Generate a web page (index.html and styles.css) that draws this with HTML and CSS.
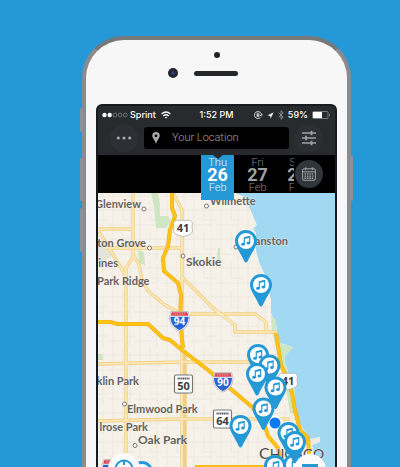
FILE: index.html
```
<!DOCTYPE html>
<html lang="en">
<head>
<meta charset="utf-8">
<meta name="viewport" content="width=device-width, initial-scale=1">
<title>Event map</title>
<link rel="stylesheet" href="styles.css">
</head>
<body>
<main class="phone">
  <span class="side-key side-key-mute"></span>
  <span class="side-key side-key-up"></span>
  <span class="side-key side-key-down"></span>
  <span class="side-key side-key-power"></span>
  <div class="bezel">
    <span class="sensor"></span>
    <div class="ear">
      <span class="camera"></span>
      <span class="speaker"></span>
    </div>
  </div>
  <div class="screen">
    <div class="status">
      <div class="status-left">
        <svg width="26" height="6" viewBox="0 0 26 6" aria-hidden="true">
          <circle cx="2.5" cy="3" r="2.2" fill="#fff"/><circle cx="7.7" cy="3" r="2.2" fill="#fff"/>
          <g fill="none" stroke="#8b8e90" stroke-width=".7"><circle cx="12.9" cy="3" r="1.9"/><circle cx="18.1" cy="3" r="1.9"/><circle cx="23.3" cy="3" r="1.9"/></g>
        </svg>
        <span>Sprint</span>
        <svg class="wifi" width="10" height="8" viewBox="0 0 10 8" fill="none" stroke="#fff" stroke-width="1.3" aria-hidden="true"><path d="M.6 3Q5-.9 9.4 3M2.3 4.9Q5 2.5 7.7 4.9"/><path d="M3.7 6.2Q5 5.2 6.3 6.2L5 7.6Z" fill="#fff" stroke="none"/></svg>
      </div>
      <span>1:52 PM</span>
      <div class="status-right">
        <svg width="9" height="8" viewBox="0 0 9 8" fill="none" stroke="#e4e5e6" stroke-width=".9" aria-hidden="true"><path d="M7.5 4A3.5 3.5 0 1 0 6.5 6.5M6 4.2 7.5 4.8 8.8 3.6"/><path d="M2.6 3.7H5.4V5.6H2.6Z" fill="#e4e5e6" stroke="none"/><path d="M3.1 3.8V3a.9.9 0 0 1 1.8 0v.8"/></svg>
        <svg width="7" height="7" viewBox="0 0 7 7" aria-hidden="true"><path d="M6.7.3.2 3.5 3.3 3.8 3.5 6.8Z" fill="#fff"/></svg>
        <svg width="6" height="10" viewBox="0 0 6 10" fill="none" stroke="#8f9294" stroke-width=".9" aria-hidden="true"><path d="M.6 2.7 5.2 7.2 3 9.3V.7L5.2 2.8.6 7.3"/></svg>
        <span>59%</span>
        <svg width="19" height="8" viewBox="0 0 19 8" aria-hidden="true"><rect x=".5" y=".5" width="15.5" height="7" rx="1" fill="none" stroke="#8b8e90" stroke-width=".8"/><path d="M1 1H10V7H1Z" fill="#fff"/><path d="M17 2.6Q18.3 4 17 5.4Z" fill="#ddd"/></svg>
      </div>
    </div>
    <header class="toolbar">
      <button class="round" type="button" aria-label="More">
        <svg width="16" height="4" viewBox="0 0 16 4" fill="#a3a7aa"><circle cx="2.3" cy="2" r="1.6"/><circle cx="8" cy="2" r="1.6"/><circle cx="13.7" cy="2" r="1.6"/></svg>
      </button>
      <label class="search">
        <svg width="8" height="12" viewBox="0 0 8 12" aria-hidden="true"><path fill="#a6aaad" fill-rule="evenodd" d="M4 0A3.7 3.7 0 0 1 7.7 3.8C7.7 6.2 5.2 8 4 12 2.8 8 .3 6.2.3 3.8A3.7 3.7 0 0 1 4 0ZM4 2.4A1.4 1.4 0 1 0 4 5.2 1.4 1.4 0 0 0 4 2.4Z"/></svg>
        <input type="text" placeholder="Your Location" aria-label="Your Location">
      </label>
      <button class="round" type="button" aria-label="Filters">
        <svg width="14" height="16" viewBox="0 0 14 16" stroke="#9da1a4" stroke-width="1.3"><path d="M0 3H14M0 8H14M0 13H14"/><path stroke-width="1.8" d="M9.5.7V5.3M4 5.7V10.3M9.5 10.7V15.3"/></svg>
      </button>
    </header>
    <nav class="dates">
      <button class="date date-on" type="button"><span>Thu</span><strong>26</strong><span>Feb</span></button>
      <button class="date" type="button"><span>Fri</span><strong>27</strong><span>Feb</span></button>
      <button class="date" type="button"><span>Sat</span><strong>28</strong><span>Feb</span></button>
      <div class="calendar">
        <button class="round round-light" type="button" aria-label="Calendar">
          <svg width="14" height="14" viewBox="0 0 14 14" fill="none" stroke="#a0a4a7"><rect x=".6" y="1.8" width="12.8" height="11.5" rx="1.4"/><path d="M.6 4.8H13.4M3.7.2V3.2M10.3.2V3.2"/><path stroke-width="1.4" stroke-dasharray="1.6 .8" d="M2.5 6.9H11.5M2.5 9.1H11.5M2.5 11.3H11.5"/></svg>
        </button>
      </div>
    </nav>
    <section class="map">
      <svg class="map-art" viewBox="98 193 237 274" role="img" aria-label="Map of Chicago">
        <defs>
          <pattern id="streets" width="27" height="29" patternUnits="userSpaceOnUse"><path d="M5 0V29M15 0V17H27M22 4V29M0 7H27M0 22H22" fill="none" stroke="#ece7dd" stroke-width=".8"/></pattern>
          <g id="pin"><path fill="#2599d6" d="M0-11A11 11 0 0 1 11 0C11 5 6 11 1.800 20Q0 23-1.800 20C-6 11-11 5-11 0A11 11 0 0 1 0-11Z"/><circle r="8" fill="#fff"/><path fill="none" stroke="#2599d6" stroke-width="1.200" d="M-1.700 3.200V-3.300L3.700-4.600V1.800"/><path stroke="#2599d6" stroke-width="1.600" d="M-1.700-2.700 3.700-4"/><ellipse cx="-3" cy="3.300" rx="1.900" ry="1.500" fill="#2599d6"/><ellipse cx="2.400" cy="2" rx="1.900" ry="1.500" fill="#2599d6"/></g>
          <g id="interstate"><path fill="#fff" stroke="#9b9c9e" stroke-width=".6" d="M-8.500-9.500H8.500L10-4C10 3 6 8 0 10-6 8-10 3-10-4Z"/><path fill="#d9404c" d="M-7.800-8.700H7.800L8.700-5.200H-8.700Z"/><path fill="#2764d2" d="M-9-4.200H9C9 2.500 5 7.200 0 9-5 7.200-9 2.500-9-4.200Z"/><path stroke="#f0b0b5" stroke-width="1.200" stroke-dasharray="1 .7" d="M-6-7H6"/></g>
          <g id="state"><rect x="-9" y="-9" width="18" height="18" rx="1.500" fill="#fff" stroke="#77787a" stroke-width="1.200"/><path stroke="#555" stroke-width="1.800" stroke-dasharray="1.300 .5" d="M-6-5.500H6"/></g>
          <path id="us" fill="#fff" stroke="#b5b3ae" stroke-width=".8" d="M-7-8Q-3.500-6.500 0-8 3.500-6.500 7-8L9.500-5Q8.500-1 9.500 3 9 7 0 8.500-9 7-9.500 3-8.500-1-9.500-5Z"/>
        </defs>
        <path fill="#f6f2ea" d="M98 193H335V467H98Z"/>
        <path fill="url(#streets)" d="M98 193H335V467H98Z"/>
        <path fill="#e6e3df" d="M98 240 108 246 112 256 105 261H98Z"/>
        <g fill="#cfe6c4"><path d="M151 193H158L160 204V216H168L171 221 166 228H156L154 207ZM138 250 144 252 145 265 139 263ZM98 354H103V360H98ZM218 248H220V260H217Z"/></g>
        <path fill="#a0d9f1" d="M235 193 245 197 257 225 253 229 256 233 256 250 259 262 265 275 271 300V313L276 323 277 332 280 343 293 347 287 354 284 358 288 372 295 387V414L302 427 310 439 320 437V442L312 445 318 467H335V193Z"/>
        <path fill="#cfe6c4" d="M271 315 276 320V332L281 344 293 347 287 354 284 358 288 372 295 387V414L290 413 284 378 272 332Z"/>
        <path fill="#eeeae3" d="M309 440 320 437V442L312 445Z"/>
        <path fill="none" stroke="#f0cf84" stroke-width="3.400" d="M133 193V257L126 268V300L126 467M133 255 139 264 142 280 148 291 165 305 178 312M98 229H133M98 230 126 276M105 248H182M173 193 182 210V260L182 467M182 277 218 313M190 314H255L266 322V332M213 308 235 325V332H277M98 364 182 362H250M98 421 182 419H290M185 350V467"/>
        <path fill="none" stroke="#fcebbc" stroke-width="1.600" d="M133 193V257L126 268V300L126 467M133 255 139 264 142 280 148 291 165 305 178 312M98 229H133M98 230 126 276M105 248H182M173 193 182 210V260L182 467M182 277 218 313M190 314H255L266 322V332M213 308 235 325V332H277M98 364 182 362H250M98 421 182 419H290"/>
        <g fill="none" stroke-linejoin="round">
          <path stroke="#eca927" stroke-width="4" d="M172 193V208L175 216 170 230 168 246 163 258 164 271 178 283 181 295 180 320 183 348M98 322H110L118 324H148L163 338 170 340 182 350 208 370 222 382 232 390 252 407 263 420 268 436 278 448 281 467M276 333 281 365 287 378 292 393 295 410 300 430 308 438 310 467M195 467H290"/>
          <path stroke="#ffc510" stroke-width="2.800" d="M172 193V208L175 216 170 230 168 246 163 258 164 271 178 283 181 295 180 320 183 348M98 322H110L118 324H148L163 338 170 340 182 350 208 370 222 382 232 390 252 407 263 420 268 436 278 448 281 467M276 333 281 365 287 378 292 393 295 410 300 430 308 438 310 467M195 467H290"/>
        </g>
        <g class="city-dot"><circle cx="144" cy="209" r="2"/><circle cx="149.500" cy="248" r="2"/><circle cx="183" cy="256" r="2"/><circle cx="206.500" cy="206" r="2"/><circle cx="236" cy="247" r="2"/><circle cx="124.500" cy="404" r="2"/><circle cx="135" cy="445.500" r="2"/></g>
        <g class="label">
          <text x="141" y="208" text-anchor="end">Glenview</text>
          <text x="210" y="205">Wilmette</text>
          <text x="146" y="247" text-anchor="end">ton Grove</text>
          <text x="288" y="245" text-anchor="end">Evanston</text>
          <text x="118" y="267" text-anchor="end">ines</text>
          <text class="label-big" x="186" y="266">Skokie</text>
          <text x="97" y="285">Park Ridge</text>
          <text x="139" y="385" text-anchor="end">klin Park</text>
          <text x="127" y="413">Elmwood Park</text>
          <text x="148" y="431" text-anchor="end">lrose Park</text>
          <text class="label-big" x="138" y="444">Oak Park</text>
          <text class="label-city" x="259" y="459">C<tspan class="label-caps">HICAGO</tspan></text>
        </g>
        <use href="#us" x="183" y="228"/><use href="#us" x="288" y="381"/>
        <use href="#interstate" x="179.500" y="321"/><use href="#interstate" x="223" y="382"/><use href="#interstate" x="112" y="469"/>
        <use href="#state" x="183.500" y="384"/><use href="#state" x="222.500" y="419"/>
        <g class="route"><text x="183" y="232">41</text><text x="288" y="385">41</text><text x="183.500" y="390">50</text><text x="222.500" y="425">64</text><text class="route-light" x="179.500" y="325">94</text><text class="route-light" x="223" y="386">90</text></g>
        <use href="#pin" x="246" y="241"/><use href="#pin" x="261" y="285"/>
        <use href="#pin" x="258" y="355"/><use href="#pin" x="269.500" y="365.500"/><use href="#pin" x="257" y="374"/><use href="#pin" x="275.500" y="387.500"/>
        <circle cx="275" cy="423" r="7.500" fill="#fff" opacity=".9"/><circle cx="275" cy="423" r="5.500" fill="#087bf5"/>
        <use href="#pin" x="263.500" y="408.500"/><use href="#pin" x="240.500" y="426"/><use href="#pin" x="288.500" y="433"/><use href="#pin" x="275" y="466"/><use href="#pin" x="294" y="465"/><use href="#pin" x="295" y="442"/><use href="#pin" x="142" y="472"/>
      </svg>
      <button class="float float-locate" type="button" aria-label="Locate me">
        <svg width="20" height="20" viewBox="0 0 20 20" fill="none" stroke="#2599d6" stroke-width="2"><circle cx="10" cy="10" r="8.500"/><path d="M10 1V6M10 14V19M1 10H6M14 10H19"/></svg>
      </button>
      <button class="float float-list" type="button" aria-label="List view">
        <svg width="16" height="12" viewBox="0 0 16 12" stroke="#2599d6" stroke-width="3"><path d="M0 1.500H16M0 6H16M0 10.500H16"/></svg>
      </button>
    </section>
  </div>
</main>
</body>
</html>
```
FILE: styles.css
```
* { box-sizing: border-box; }

body {
  display: flex;
  min-height: 100vh;
  margin: 0;
  padding: 36px 49px 0 82px;
  background: #2599d7;
  font-family: Roboto, "Liberation Sans", sans-serif;
}

button {
  margin: 0;
  padding: 0;
  border: 0;
  font-family: inherit;
}

svg { display: block; flex: none; }

.phone {
  position: relative;
  flex: 1;
  min-width: 0;
  padding: 0 10px;
  border: 4px solid #8b8b8d;
  border-top-color: #77787a;
  border-bottom: 0;
  border-radius: 42px 42px 0 0;
  background: #f7f7f7;
}

.side-key {
  position: absolute;
  left: -6px;
  width: 3px;
  border-radius: 2px;
  background: #8c9298;
}
.side-key-mute { top: 68px; height: 24px; }
.side-key-up { top: 118px; height: 43px; }
.side-key-down { top: 168px; height: 44px; }
.side-key-power { top: 116px; right: -6px; left: auto; height: 45px; }

.bezel {
  display: flex;
  flex-direction: column;
  align-items: center;
  gap: 10px;
  height: 64px;
  padding-top: 12px;
}
.sensor {
  width: 6px;
  height: 6px;
  border-radius: 50%;
  background: #222326;
}
.ear {
  display: flex;
  align-items: center;
  gap: 16px;
  padding-right: 28px;
}
.camera {
  width: 10px;
  height: 10px;
  border: 3px solid #24262b;
  border-radius: 50%;
  background: #34406c;
}
.speaker {
  width: 44px;
  height: 5px;
  border-radius: 3px;
  background: #24262a;
}

.screen {
  border: 2px solid #171b1f;
  border-bottom: 0;
  border-radius: 6px 6px 0 0;
  background: #272b2e;
}

.status {
  display: grid;
  grid-template-columns: 1fr auto 1fr;
  align-items: center;
  height: 18px;
  padding: 0 4px;
  color: #fff;
  font: 500 9px/18px Inter, "Liberation Sans", sans-serif;
}
.status-left,
.status-right {
  display: flex;
  align-items: center;
  gap: 2px;
}
.wifi { margin-left: 3px; }
.status-right { justify-content: flex-end; gap: 4px; }

.toolbar {
  display: flex;
  align-items: center;
  gap: 6px;
  padding: 0 12px 3px;
}
.round {
  display: grid;
  flex: none;
  place-items: center;
  width: 28px;
  height: 28px;
  border-radius: 50%;
  background: #2c3034;
}
.round-light { background: #30363a; }
.search {
  display: flex;
  flex: 1;
  align-items: center;
  gap: 12px;
  min-width: 0;
  height: 22px;
  padding: 0 8px;
  border-radius: 3px;
  background: #000;
}
.search input {
  flex: 1;
  width: 0;
  padding: 0;
  border: 0;
  outline: 0;
  background: none;
  color: #fff;
  font: 300 11px/16px Roboto, sans-serif;
}
.search input::placeholder { color: #a0a3a6; opacity: 1; }

.dates {
  position: relative;
  z-index: 1;
  display: flex;
  align-items: flex-start;
  gap: 7px;
  height: 38px;
  padding-left: 43.5%;
  background: #000;
}
.date {
  position: relative;
  display: flex;
  flex: none;
  flex-direction: column;
  align-items: center;
  width: 33px;
  height: 38px;
  padding-top: 2px;
  background: none;
  color: #84878a;
  font-size: 11px;
  font-weight: 300;
  line-height: 11px;
}
.date strong {
  color: #9fa2a4;
  font-size: 18px;
  font-weight: 700;
  line-height: 14px;
}
.date-on {
  height: 45px;
  background: #2599d6;
  color: #e4f4fc;
}
.date-on strong { color: #fff; }
.date-on::before {
  position: absolute;
  top: 0;
  left: 50%;
  border: 5px solid transparent;
  border-top: 4px solid #272b2e;
  border-bottom: 0;
  content: "";
  transform: translateX(-50%);
}
.calendar {
  position: absolute;
  top: 0;
  right: 0;
  display: flex;
  align-items: center;
  height: 38px;
  padding: 0 12px 0 1px;
  background: #000;
}

.map {
  position: relative;
  overflow: hidden;
}
.map-art { width: 100%; height: auto; }
.city-dot { fill: #fff; stroke: #77756f; stroke-width: 1px; }
.label {
  fill: #65625e;
  stroke: #f8f5ee;
  stroke-width: 1px;
  stroke-opacity: .7;
  paint-order: stroke;
  font: 700 11px Lato, sans-serif;
}
.label-big { font-size: 12px; }
.label-city { fill: #4b4945; font-size: 16px; font-weight: 400; }
.label-caps { font-size: 14px; }
.route {
  fill: #3b3b3b;
  font: 700 11px "Open Sans", sans-serif;
  text-anchor: middle;
}
.route-light { fill: #fff; font-size: 10px; }

.float {
  position: absolute;
  display: grid;
  place-items: center;
  width: 32px;
  height: 32px;
  border-radius: 50%;
  background: #fafafa;
}
.float-locate { bottom: -18px; left: 10px; }
.float-list { right: 9px; bottom: -19px; }
```
